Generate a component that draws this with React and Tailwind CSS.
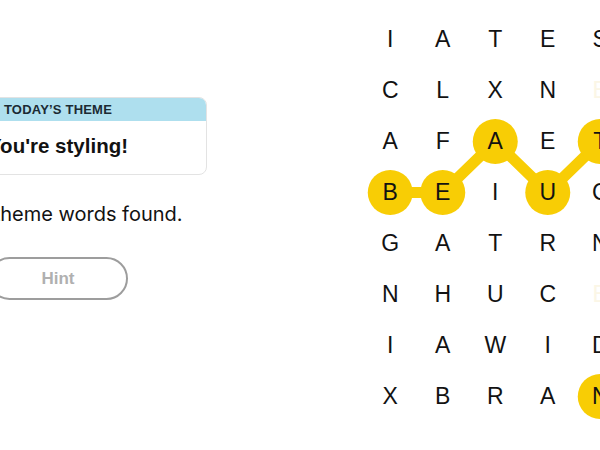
import React from "react";

const rows = [
  ["I", "A", "T", "E", "S", "R"],
  ["C", "L", "X", "N", "E", "T"],
  ["A", "F", "A", "E", "T", "Y"],
  ["B", "E", "I", "U", "C", "L"],
  ["G", "A", "T", "R", "N", "E"],
  ["N", "H", "U", "C", "E", "S"],
  ["I", "A", "W", "I", "D", "O"],
  ["X", "B", "R", "A", "N", "D"],
];

const CW = 52.5;
const RH = 51;
const cx = (c) => CW / 2 + CW * c;
const cy = (r) => RH / 2 + RH * r;

const sel = {
  "3-0": true,
  "3-1": true,
  "2-2": true,
  "3-3": true,
  "2-4": true,
  "7-4": true,
};
const faint = { "1-4": true, "5-4": true };

const path = [
  [3, 0],
  [3, 1],
  [2, 2],
  [3, 3],
  [2, 4],
];

export default function App() {
  const Y = "#f8cd05";
  return (
    <div
      className="w-[600px] h-[450px] overflow-hidden bg-white flex"
      style={{ fontFamily: "'Liberation Sans', Arial, sans-serif" }}
    >
      <div className="ml-[-91px] w-[298px] shrink-0 flex flex-col items-center pt-[97px]">
        <div className="w-[298px] rounded-[8px] border border-[#e3e3e3] overflow-hidden">
          <div className="h-[23px] bg-[#aedfee] flex items-center justify-center text-[13px] font-bold tracking-[0.2px] text-[#1b2a33]">
            TODAY’S THEME
          </div>
          <div className="h-[53px] flex items-center justify-center text-[20.5px] font-bold text-[#121212] pb-[3px]">
            You're styling!
          </div>
        </div>
        <div
          className="mt-[27px] text-[20px] text-[#121212] leading-[24px] whitespace-nowrap"
          style={{ fontFamily: "Inter, 'Liberation Sans', sans-serif" }}
        >
          0 of 7 theme words found.
        </div>
        <button className="mt-[31px] w-[140px] h-[43px] rounded-full border-[2px] border-[#9d9d9d] text-[17px] font-bold text-[#b0b0b0] flex items-center justify-center">
          Hint
        </button>
      </div>
      <div className="ml-[157px] mt-[13.5px] relative shrink-0 w-[315px] h-[408px]">
        <svg
          className="absolute left-0 top-0"
          width="315"
          height="408"
          viewBox="0 0 315 408"
        >
          <polyline
            points={path.map(([r, c]) => `${cx(c)},${cy(r)}`).join(" ")}
            fill="none"
            stroke={Y}
            strokeWidth="11"
            strokeLinejoin="round"
          />
          {Object.keys(sel).map((k) => {
            const [r, c] = k.split("-").map(Number);
            return <circle key={k} cx={cx(c)} cy={cy(r)} r="22.5" fill={Y} />;
          })}
        </svg>
        <div className="relative flex flex-col">
          {rows.map((row, r) => (
            <div key={r} className="flex h-[51px]">
              {row.map((ch, c) => {
                const k = `${r}-${c}`;
                return (
                  <div
                    key={c}
                    className={
                      "w-[52.5px] shrink-0 flex items-center justify-center text-[23px] " +
                      (faint[k] ? "text-[#fbf6e6]" : "text-[#121212]")
                    }
                  >
                    {ch}
                  </div>
                );
              })}
            </div>
          ))}
        </div>
      </div>
    </div>
  );
}
